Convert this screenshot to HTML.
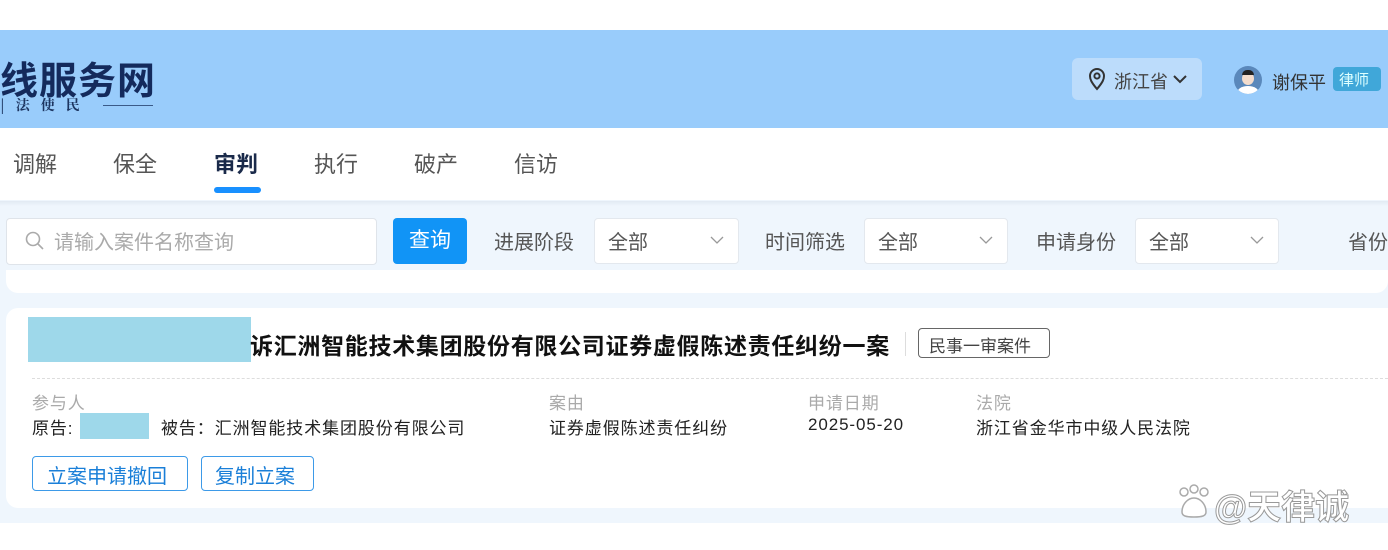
<!DOCTYPE html>
<html><head><meta charset="utf-8"><style>
*{margin:0;padding:0;box-sizing:border-box}
body{width:1388px;height:550px;overflow:hidden;background:#fff;font-family:"Liberation Sans","Noto Sans CJK SC",sans-serif;position:relative;color:#333}
.a{position:absolute;white-space:nowrap}
.sel{position:absolute;top:218px;height:46px;background:#fff;border:1px solid #e3e8ee;border-radius:4px;font-size:20px;color:#555;padding:7px 0 0 13px}
.sel svg{position:absolute;right:14px;top:17px}
.lab{position:absolute;top:226px;font-size:20px;color:#555}
.t{font-size:17px;letter-spacing:0.9px}
</style></head><body>
<div class="a" style="left:0;top:30px;width:1388px;height:98px;background:#99ccfb"></div>
<div class="a" style="left:0;top:50px;font-size:38px;font-weight:bold;color:#142a5c;letter-spacing:1px">线服务网</div>
<div class="a" style="left:0;top:95px;font-size:14px;font-weight:bold;color:#1d3560;font-family:'Noto Serif CJK SC',serif;letter-spacing:11px">|法使民</div>
<div class="a" style="left:103px;top:105px;width:50px;height:1px;background:#3a5a88"></div>
<div class="a" style="left:1072px;top:58px;width:130px;height:42px;background:#bcdcfb;border-radius:6px"></div>
<svg class="a" style="left:1087px;top:67px" width="20" height="24" viewBox="0 0 20 24"><path d="M10 22C4 15 3 12 3 9a7 7 0 0 1 14 0c0 3-1 6-7 13z" fill="none" stroke="#333" stroke-width="2"/><circle cx="10" cy="9" r="2.6" fill="none" stroke="#333" stroke-width="2"/></svg>
<div class="a" style="left:1114px;top:68px;font-size:18px;color:#444">浙江省</div>
<svg class="a" style="left:1172px;top:74px" width="16" height="10"><path d="M2 2l6 6 6-6" fill="none" stroke="#333" stroke-width="2"/></svg>
<div class="a" style="left:1234px;top:66px;width:28px;height:28px;border-radius:50%;background:#5a88bb;overflow:hidden"><div style="position:absolute;left:8px;top:6px;width:12px;height:13px;border-radius:50%;background:#f3dccc"></div><div style="position:absolute;left:8px;top:4px;width:12px;height:5px;border-radius:5px 5px 0 0;background:#222"></div><div style="position:absolute;left:3px;top:20px;width:22px;height:14px;border-radius:50%;background:#fff"></div></div>
<div class="a" style="left:1272px;top:69px;font-size:18px;color:#333">谢保平</div>
<div class="a" style="left:1333px;top:67px;width:48px;height:24px;background:#40a7d9;border-radius:4px;color:#dff;font-size:15px;padding:2px 0 0 6px">律师</div>
<div class="a" style="left:13px;top:147px;font-size:22px;color:#555">调解</div>
<div class="a" style="left:113px;top:147px;font-size:22px;color:#555">保全</div>
<div class="a" style="left:214px;top:147px;font-size:22px;color:#1a2a4a;font-weight:bold">审判</div>
<div class="a" style="left:214px;top:187px;width:47px;height:6px;border-radius:3px;background:#1890ff"></div>
<div class="a" style="left:314px;top:147px;font-size:22px;color:#555">执行</div>
<div class="a" style="left:414px;top:147px;font-size:22px;color:#555">破产</div>
<div class="a" style="left:514px;top:147px;font-size:22px;color:#555">信访</div>
<div class="a" style="left:0;top:200px;width:1388px;height:323px;background:#eff6fd"></div>
<div class="a" style="left:0;top:201px;width:1388px;height:5px;background:linear-gradient(#e2eaf3,#eff6fd)"></div>
<div class="a" style="left:6px;top:218px;width:371px;height:47px;background:#fff;border:1px solid #dfe4ea;border-radius:4px"></div>
<svg class="a" style="left:24px;top:230px" width="22" height="22"><circle cx="9" cy="9" r="6.5" fill="none" stroke="#aaa" stroke-width="1.6"/><path d="M14 14l5 5" stroke="#aaa" stroke-width="1.6"/></svg>
<div class="a" style="left:54px;top:226px;font-size:20px;color:#aaa">请输入案件名称查询</div>
<div class="a" style="left:393px;top:218px;width:74px;height:46px;background:#1194f6;border-radius:4px;color:#fff;font-size:21px;padding:6px 0 0 16px">查询</div>
<div class="lab" style="left:494px">进展阶段</div>
<div class="sel" style="left:594px;width:145px">全部<svg width="14" height="9"><path d="M1 1l6 6 6-6" fill="none" stroke="#999" stroke-width="1.3"/></svg></div>
<div class="lab" style="left:765px">时间筛选</div>
<div class="sel" style="left:864px;width:144px">全部<svg width="14" height="9"><path d="M1 1l6 6 6-6" fill="none" stroke="#999" stroke-width="1.3"/></svg></div>
<div class="lab" style="left:1036px">申请身份</div>
<div class="sel" style="left:1135px;width:144px">全部<svg width="14" height="9"><path d="M1 1l6 6 6-6" fill="none" stroke="#999" stroke-width="1.3"/></svg></div>
<div class="lab" style="left:1348px">省份</div>
<div class="a" style="left:6px;top:270px;width:1382px;height:23px;background:#fff;border-radius:0 0 12px 12px"></div>
<div class="a" style="left:6px;top:308px;width:1382px;height:200px;background:#fff;border-radius:12px 0 0 12px"></div>
<div class="a" style="left:0;top:523px;width:1388px;height:27px;background:#fff"></div>
<div class="a" style="left:28px;top:317px;width:223px;height:45px;background:#9ed8ea"></div>
<div class="a" style="left:250px;top:327px;font-size:23px;font-weight:bold;color:#111;letter-spacing:0.7px">诉汇洲智能技术集团股份有限公司证券虚假陈述责任纠纷一案</div>
<div class="a" style="left:905px;top:332px;width:1px;height:24px;background:#ddd"></div>
<div class="a" style="left:918px;top:328px;width:132px;height:30px;border:1px solid #666;border-radius:4px;font-size:17px;color:#444;padding:3px 0 0 10px">民事一审案件</div>
<div class="a" style="left:32px;top:378px;width:1356px;border-top:1px dashed #ddd"></div>
<div class="a t" style="left:32px;top:389px;color:#aaa">参与人</div>
<div class="a t" style="left:32px;top:414px;color:#222">原告:</div>
<div class="a" style="left:80px;top:413px;width:69px;height:26px;background:#9ed8ea"></div>
<div class="a t" style="left:161px;top:414px;color:#222">被告：汇洲智能技术集团股份有限公司</div>
<div class="a t" style="left:549px;top:389px;color:#aaa">案由</div>
<div class="a t" style="left:549px;top:414px;color:#222">证券虚假陈述责任纠纷</div>
<div class="a t" style="left:808px;top:389px;color:#aaa">申请日期</div>
<div class="a t" style="left:808px;top:415px;color:#222">2025-05-20</div>
<div class="a t" style="left:976px;top:389px;color:#aaa">法院</div>
<div class="a t" style="left:976px;top:414px;color:#222">浙江省金华市中级人民法院</div>
<div class="a" style="left:32px;top:456px;width:156px;height:35px;border:1.5px solid #3d9ae8;border-radius:4px;color:#1a7fd8;font-size:20px;padding:3px 0 0 14px">立案申请撤回</div>
<div class="a" style="left:201px;top:456px;width:113px;height:35px;border:1.5px solid #3d9ae8;border-radius:4px;color:#1a7fd8;font-size:20px;padding:3px 0 0 13px">复制立案</div>
<svg class="a" style="left:1176px;top:484px" width="36" height="36"><g fill="#fff" stroke="#aaa" stroke-width="1.5"><circle cx="8" cy="8" r="4"/><circle cx="18" cy="5" r="4"/><circle cx="28" cy="8" r="4"/><path d="M6 28c0-8 6-14 12-14s12 6 12 14c0 4-4 5-12 5s-12-1-12-5z"/></g></svg>
<div class="a" style="left:1214px;top:480px;font-size:34px;color:#fff;-webkit-text-stroke:1px #999;font-weight:bold">@天律诚</div>
</body></html>
